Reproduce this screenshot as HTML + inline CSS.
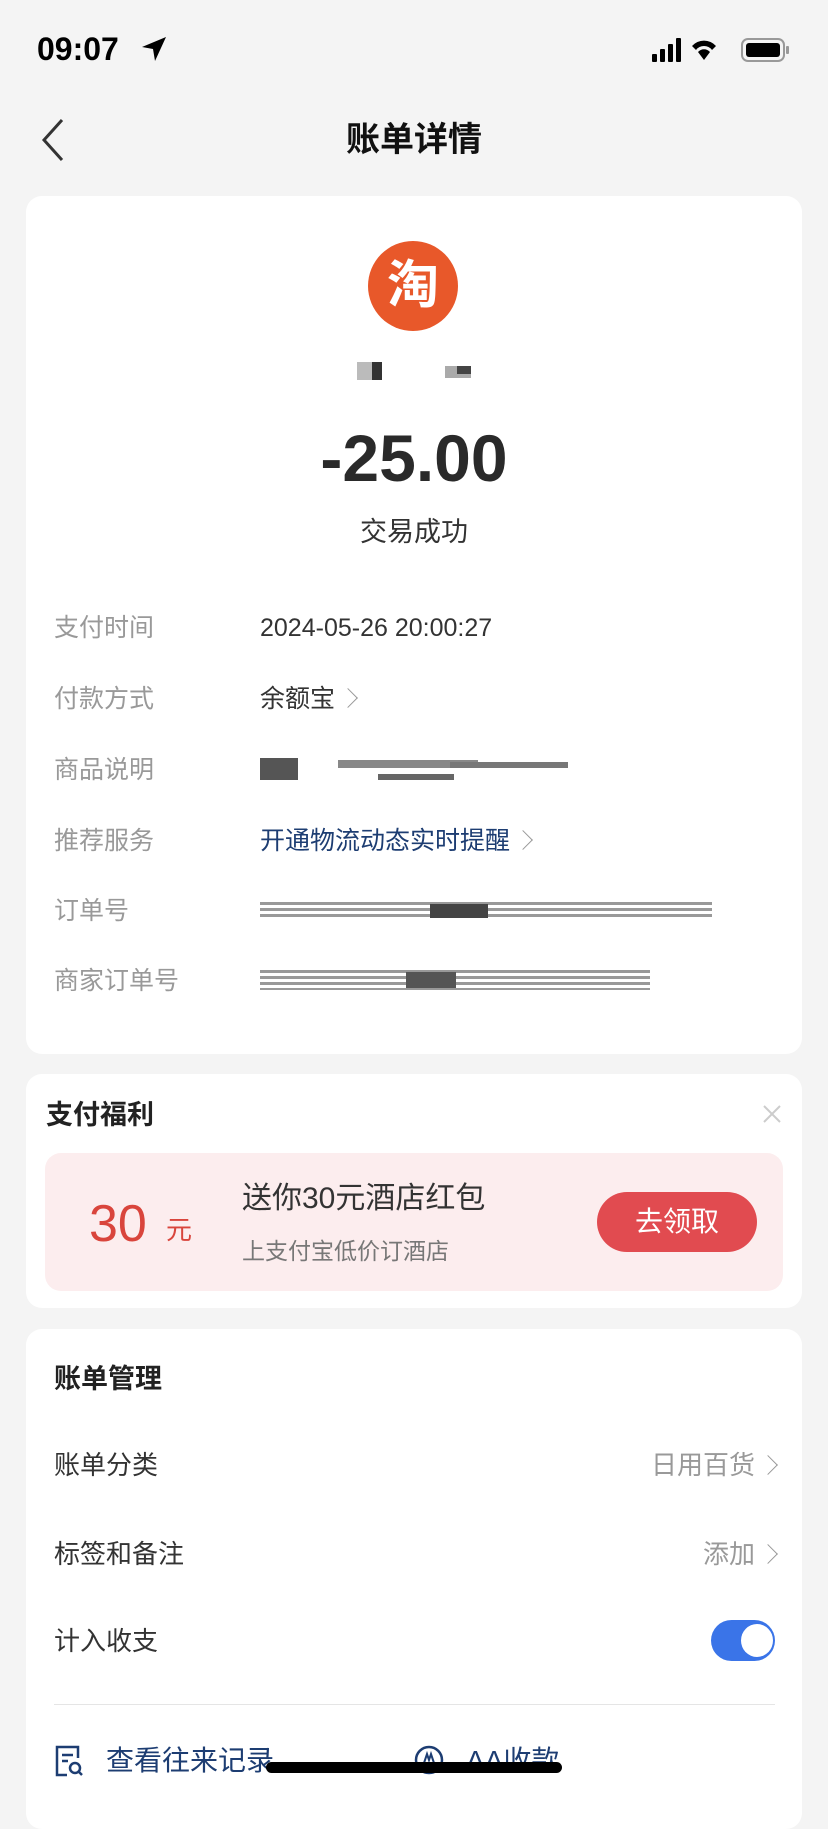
<!DOCTYPE html>
<html><head><meta charset="utf-8"><style>
*{margin:0;padding:0;box-sizing:border-box}
body{width:828px;height:1792px;background:#f4f4f4;font-family:"Liberation Sans","Noto Sans CJK SC",sans-serif;position:relative;overflow:hidden;color:#333}
.a{position:absolute;white-space:nowrap}
.card{position:absolute;left:26px;width:776px;background:#fff;border-radius:16px}
.lbl{position:absolute;left:54px;font-size:25px;color:#999;line-height:30px}
.val{position:absolute;left:260px;font-size:25px;color:#333;line-height:30px}
.b{position:absolute;height:4px}
.chev{display:inline-block;width:14px;height:14px;border-right:1.5px solid #999;border-top:1.5px solid #999;transform:rotate(45deg);margin-left:6px;vertical-align:middle;position:relative;top:-2px}
</style></head><body>
<div class="a" style="left:37px;top:30px;font-size:32px;font-weight:bold;color:#000;line-height:38px">09:07</div>
<svg class="a" style="left:140px;top:35px" width="28" height="28" viewBox="0 0 28 28"><path d="M26 2 L2 12 L13 14 L15 26 Z" fill="#000"/></svg>
<svg class="a" style="left:652px;top:36px" width="140" height="28" viewBox="0 0 140 28">
<rect x="0" y="18" width="5" height="8" rx="1" fill="#000"/><rect x="8" y="13" width="5" height="13" rx="1" fill="#000"/><rect x="16" y="8" width="5" height="18" rx="1" fill="#000"/><rect x="24" y="2" width="5" height="24" rx="1" fill="#000"/>
<path d="M40 10 A16 16 0 0 1 64 10 L60 14 A10 10 0 0 0 44 14 Z M46 16 A8 8 0 0 1 58 16 L52 24 Z" fill="#000"/>
<rect x="90" y="3" width="42" height="22" rx="6" fill="none" stroke="#999" stroke-width="2"/><rect x="94" y="7" width="34" height="14" rx="3" fill="#000"/><rect x="134" y="10" width="3" height="8" rx="1" fill="#999"/>
</svg>
<svg class="a" style="left:38px;top:118px" width="30" height="44" viewBox="0 0 30 44"><path d="M24 2 L6 22 L24 42" fill="none" stroke="#333" stroke-width="3"/></svg>
<div class="a" style="left:0;width:828px;text-align:center;top:118px;font-size:34px;font-weight:bold;color:#111;line-height:44px">账单详情</div>

<div class="card" style="top:196px;height:858px"></div>
<div class="a" style="left:368px;top:241px;width:90px;height:90px;border-radius:50%;background:#e8582a;color:#fff;font-size:52px;font-weight:bold;text-align:center;line-height:90px">淘</div>
<div class="a" style="left:357px;top:362px;width:22px;height:18px;background:#bbb"></div>
<div class="a" style="left:372px;top:362px;width:10px;height:18px;background:#333"></div>
<div class="a" style="left:445px;top:366px;width:26px;height:12px;background:#aaa"></div>
<div class="a" style="left:457px;top:366px;width:14px;height:8px;background:#444"></div>
<div class="a" style="left:0;width:828px;text-align:center;top:418px;font-size:66px;font-weight:bold;color:#2a2a2a;line-height:80px">-25.00</div>
<div class="a" style="left:0;width:828px;text-align:center;top:515px;font-size:27px;color:#333;line-height:34px">交易成功</div>

<div class="lbl" style="top:613px">支付时间</div><div class="val" style="top:613px">2024-05-26 20:00:27</div>
<div class="lbl" style="top:684px">付款方式</div><div class="val" style="top:684px">余额宝<span class="chev"></span></div>
<div class="lbl" style="top:755px">商品说明</div>
<div class="b" style="left:260px;top:758px;width:38px;height:22px;background:#555"></div>
<div class="b" style="left:338px;top:760px;width:140px;height:8px;background:#888"></div>
<div class="b" style="left:378px;top:774px;width:76px;height:6px;background:#666"></div>
<div class="b" style="left:450px;top:762px;width:118px;height:6px;background:#777"></div>
<div class="lbl" style="top:826px">推荐服务</div><div class="val" style="top:826px;color:#1d3d72">开通物流动态实时提醒<span class="chev"></span></div>
<div class="lbl" style="top:896px">订单号</div>
<div class="b" style="left:260px;top:902px;width:452px;height:18px;background:repeating-linear-gradient(#999 0 3px,#fff 3px 6px)"></div>
<div class="b" style="left:430px;top:904px;width:58px;height:14px;background:#444"></div>
<div class="lbl" style="top:966px">商家订单号</div>
<div class="b" style="left:260px;top:970px;width:390px;height:20px;background:repeating-linear-gradient(#999 0 3px,#fff 3px 6px)"></div>
<div class="b" style="left:406px;top:972px;width:50px;height:16px;background:#555"></div>

<div class="card" style="top:1074px;height:234px"></div>
<div class="a" style="left:46px;top:1098px;font-size:27px;font-weight:bold;color:#222;line-height:34px">支付福利</div>
<svg class="a" style="left:762px;top:1104px" width="20" height="20" viewBox="0 0 20 20"><path d="M2 2L18 18M18 2L2 18" stroke="#ccc" stroke-width="2"/></svg>
<div class="a" style="left:45px;top:1153px;width:738px;height:138px;border-radius:16px;background:#fcedee"></div>
<div class="a" style="left:89px;top:1194px;font-size:52px;color:#d9453c;line-height:60px">30</div>
<div class="a" style="left:166px;top:1214px;font-size:26px;color:#d9453c;line-height:32px">元</div>
<div class="a" style="left:242px;top:1180px;font-size:30px;color:#333;line-height:38px">送你30元酒店红包</div>
<div class="a" style="left:242px;top:1236px;font-size:23px;color:#777;line-height:30px">上支付宝低价订酒店</div>
<div class="a" style="left:597px;top:1192px;width:160px;height:60px;border-radius:30px;background:#e14b50;color:#fff;font-size:28px;text-align:center;line-height:60px">去领取</div>

<div class="card" style="top:1329px;height:500px"></div>
<div class="a" style="left:54px;top:1362px;font-size:27px;font-weight:bold;color:#222;line-height:34px">账单管理</div>
<div class="a" style="left:54px;top:1449px;font-size:26px;color:#333;line-height:32px">账单分类</div>
<div class="a" style="right:53px;top:1449px;font-size:26px;color:#999;line-height:32px">日用百货<span class="chev"></span></div>
<div class="a" style="left:54px;top:1538px;font-size:26px;color:#333;line-height:32px">标签和备注</div>
<div class="a" style="right:53px;top:1538px;font-size:26px;color:#999;line-height:32px">添加<span class="chev"></span></div>
<div class="a" style="left:54px;top:1625px;font-size:26px;color:#333;line-height:32px">计入收支</div>
<div class="a" style="left:711px;top:1620px;width:64px;height:41px;border-radius:21px;background:#3a74e8"></div>
<div class="a" style="left:741px;top:1624px;width:32px;height:33px;border-radius:50%;background:#fff"></div>
<div class="a" style="left:54px;top:1704px;width:721px;height:1px;background:#e5e5e5"></div>
<svg class="a" style="left:54px;top:1744px" width="30" height="34" viewBox="0 0 30 34"><path d="M24 14V3H3v28h10M8 11h11M8 17h6" fill="none" stroke="#1d3d72" stroke-width="2.5"/><circle cx="21" cy="24" r="5" fill="none" stroke="#1d3d72" stroke-width="2.5"/><path d="M25 28l3 3" stroke="#1d3d72" stroke-width="2.5"/></svg>
<div class="a" style="left:106px;top:1743px;font-size:28px;color:#1d3d72;line-height:36px">查看往来记录</div>
<svg class="a" style="left:413px;top:1744px" width="32" height="34" viewBox="0 0 32 34"><circle cx="16" cy="16" r="13" fill="none" stroke="#1d3d72" stroke-width="2.5"/><path d="M10 22l4-12 2 6 2-6 4 12" fill="none" stroke="#1d3d72" stroke-width="2"/></svg>
<div class="a" style="left:466px;top:1743px;font-size:28px;color:#1d3d72;line-height:36px">AA收款</div>
<div class="a" style="left:266px;top:1762px;width:296px;height:11px;border-radius:6px;background:#000"></div>
</body></html>
